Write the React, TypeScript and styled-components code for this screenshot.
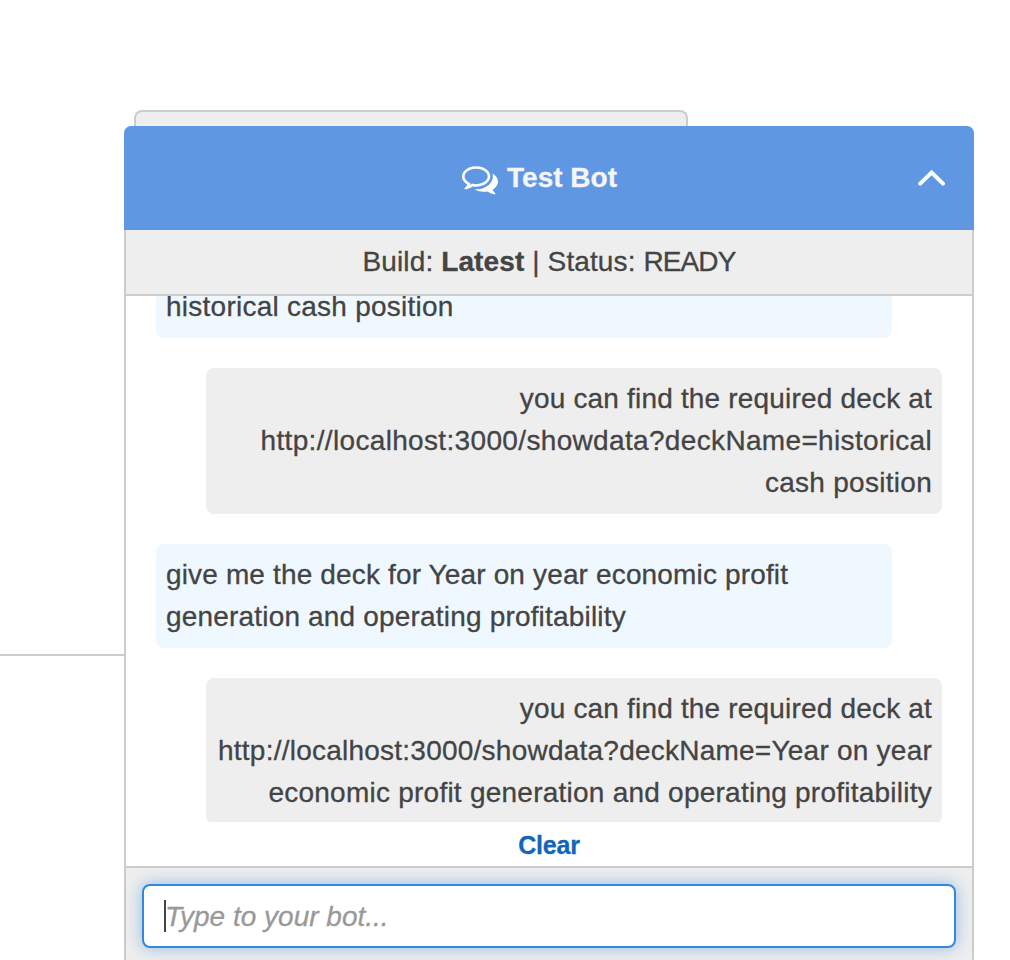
import React from 'react';
import styled, { createGlobalStyle } from 'styled-components';

const GlobalStyle = createGlobalStyle`
  * { box-sizing: border-box; }
  body {
    margin: 0;
    background: #fff;
    color: #444;
    font-family: 'Liberation Sans', Helvetica, Arial, sans-serif;
    font-size: 28px;
    line-height: 42px;
    -webkit-text-stroke: 0.3px currentColor;
  }
`;

const Page = styled.main`
  display: flex;
  align-items: flex-start;
  width: 1010px;
  height: 960px;
  overflow: hidden;
`;

const SideRule = styled.div`
  flex: none;
  width: 124px;
  height: 656px;
  border-bottom: 2px solid #ccc;
`;

const Column = styled.div`
  display: flex;
  flex-direction: column;
  width: 850px;
  height: 960px;
  padding-top: 110px;
`;

const BackTab = styled.div`
  flex: none;
  width: 554px;
  height: 16px;
  margin-left: 10px;
  background: #eee;
  border: 2px solid #ccc;
  border-bottom: 0;
  border-radius: 8px 8px 0 0;
`;

const Header = styled.header`
  flex: none;
  display: flex;
  align-items: center;
  height: 104px;
  padding-right: 28px;
  border-radius: 7px 7px 0 0;
  background: #5f97e2;
  color: #fff;
`;

const Title = styled.h1`
  flex: 1;
  display: flex;
  align-items: center;
  justify-content: center;
  gap: 9px;
  margin: 0;
  padding-left: 37px;
  color: #f4f5f8;
  font-size: 28px;
  font-weight: bold;

  svg { flex: none; margin-top: 2px; color: #fff; }
`;

const TitleText = styled.span`
  white-space: nowrap;
`;

const Body = styled.section`
  flex: 1;
  display: flex;
  flex-direction: column;
  min-height: 0;
  border: solid #ccc;
  border-width: 0 2px;
`;

const Status = styled.div`
  flex: none;
  height: 66px;
  padding-top: 11px;
  border-bottom: 2px solid #ccc;
  background: #eee;
  text-align: center;
`;

const Spaced = styled.span<{ $spacing: number }>`
  letter-spacing: ${(p) => p.$spacing}px;
  white-space: nowrap;
`;

const Messages = styled.div`
  flex: none;
  display: flex;
  flex-direction: column;
  justify-content: flex-start;
  gap: 30px;
  height: 526px;
  padding: 0 30px;
  overflow: hidden;
`;

const Bubble = styled.div<{ $from: 'user' | 'bot'; $cut?: boolean }>`
  flex: none;
  display: flex;
  flex-direction: column;
  align-items: ${(p) => (p.$from === 'bot' ? 'flex-end' : 'flex-start')};
  align-self: ${(p) => (p.$from === 'bot' ? 'flex-end' : 'flex-start')};
  width: 736px;
  padding: 10px;
  margin-top: ${(p) => (p.$cut ? '-20px' : '0')};
  border-radius: 8px;
  background: ${(p) => (p.$from === 'bot' ? '#eee' : '#f0f8ff')};
`;

const ClearRow = styled.div`
  flex: none;
  height: 46px;
  padding-top: 2px;
  display: flex;
  justify-content: center;
  align-items: center;
  border-bottom: 2px solid #ccc;
`;

const ClearButton = styled.button`
  padding: 0;
  border: 0;
  background: none;
  color: #1166bb;
  font: bold 25px/42px 'Liberation Sans', Helvetica, Arial, sans-serif;
  letter-spacing: -0.2px;
`;

const Composer = styled.div`
  flex: 1;
  padding: 16px;
  background: #eee;
`;

const InputBox = styled.div`
  display: flex;
  align-items: center;
  height: 64px;
  padding-left: 20px;
  border: 2px solid #3388dd;
  border-radius: 8px;
  background: #fff;
  box-shadow: 0 0 16px rgba(51, 136, 221, 0.5);
`;

const Caret = styled.span`
  width: 2px;
  height: 32px;
  margin-right: -1px;
  background: #444;
`;

const Placeholder = styled.span`
  padding-top: 1px;
  color: #999;
  font-style: italic;
`;

const CommentsIcon = () => (
  <svg width="36" height="36" viewBox="0 0 1792 1792" fill="currentColor">
    <path d="M704 384q-153 0-286 52t-211.5 141-78.5 191q0 82 53 158t149 132l97 56-35 84q34-20 62-39l44-31 53 10q78 14 153 14 153 0 286-52t211.5-141 78.5-191-78.5-191-211.5-141-286-52zm0-128q191 0 353.5 68.5t256.5 186.5 94 257-94 257-256.5 186.5-353.5 68.5q-86 0-176-16-124 88-278 128-36 9-86 16h-3q-11 0-20.5-8t-11.5-21q-1-3-1-6.5t.5-6.5 2-6l2.5-5 3.5-5.5 4-5 4.5-5 4-4.5q5-6 23-25t26-29.5 22.5-29 25-38.5 20.5-44q-124-72-195-177t-71-224q0-139 94-257t256.5-186.5 353.5-68.5zm822 1169q10 24 20.5 44t25 38.5 22.5 29 26 29.5 23 25q1 1 4 4.5t4.5 5 4 5 3.5 5.5l2.5 5 2 6 .5 6.5-1 6.5q-3 14-13 22t-22 7q-50-7-86-16-154-40-278-128-90 16-176 16-271 0-472-132 58 4 88 4 161 0 309-45t264-129q125-92 192-212t67-254q0-77-23-152 129 71 204 178t75 230q0 120-71 224.5t-195 176.5z" />
  </svg>
);

const ChevronUp = () => (
  <svg width="28" height="18" viewBox="0 0 28 18" fill="none" stroke="currentColor" strokeWidth="4" strokeLinecap="round">
    <path d="M2.2 14.6 13.6 3.6 25 14.6" />
  </svg>
);

type Line = [text: string, spacing: number];
type Message = { from: 'user' | 'bot'; cut?: boolean; lines: Line[] };

const messages: Message[] = [
  { from: 'user', cut: true, lines: [['historical cash position', 0.25]] },
  {
    from: 'bot',
    lines: [
      ['you can find the required deck at', 0.18],
      ['http://localhost:3000/showdata?deckName=historical', 0.34],
      ['cash position', 0.28],
    ],
  },
  {
    from: 'user',
    lines: [
      ['give me the deck for Year on year economic profit', 0.15],
      ['generation and operating profitability', 0.18],
    ],
  },
  {
    from: 'bot',
    lines: [
      ['you can find the required deck at', 0.18],
      ['http://localhost:3000/showdata?deckName=Year on year', 0.235],
      ['economic profit generation and operating profitability', 0.24],
    ],
  },
];

export default function App() {
  return (
    <Page>
      <GlobalStyle />
      <SideRule />
      <Column>
        <BackTab />
        <Header>
          <Title>
            <CommentsIcon />
            <TitleText>Test Bot</TitleText>
          </Title>
          <ChevronUp />
        </Header>
        <Body>
          <Status>
            <Spaced $spacing={0.12}>
              Build: <b>Latest</b> | Status: <Spaced $spacing={-0.9}>READY</Spaced>
            </Spaced>
          </Status>
          <Messages>
            {messages.map((message, i) => (
              <Bubble key={i} $from={message.from} $cut={message.cut}>
                {message.lines.map(([text, spacing]) => (
                  <Spaced key={text} $spacing={spacing}>{text}</Spaced>
                ))}
              </Bubble>
            ))}
          </Messages>
          <ClearRow>
            <ClearButton>Clear</ClearButton>
          </ClearRow>
          <Composer>
            <InputBox>
              <Caret />
              <Placeholder>Type to your bot...</Placeholder>
            </InputBox>
          </Composer>
        </Body>
      </Column>
    </Page>
  );
}
